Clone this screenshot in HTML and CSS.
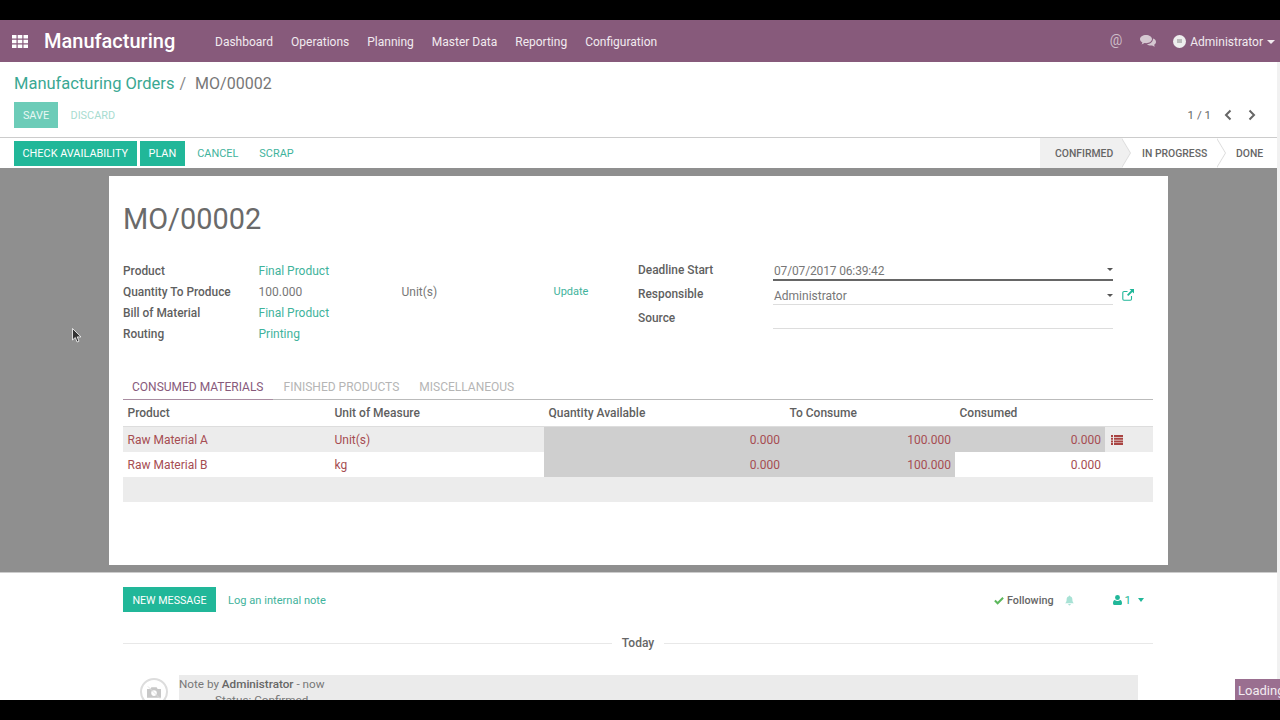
FILE: index.html
```html
<!DOCTYPE html>
<html lang="en">
<head>
  <meta charset="UTF-8">
  <title>MO/00002 - Manufacturing</title>
  <link rel="stylesheet" href="styles.css">
</head>
<body>
  <div class="screen">
    <header class="navbar">
      <svg class="apps-icon" width="16" height="13" viewBox="0 0 16 13">
        <path fill="#fff" d="M0 0h4.500v3.500H0zM5.700 0h4.600v3.500H5.700zM11.500 0H16v3.500h-4.500zM0 4.700h4.500v3.600H0zM5.700 4.700h4.600v3.600H5.700zM11.500 4.700H16v3.600h-4.500zM0 9.500h4.500V13H0zM5.700 9.500h4.600V13H5.700zM11.500 9.500H16V13h-4.500z"/>
      </svg>
      <div class="brand">Manufacturing</div>
      <nav class="menu">
        <a>Dashboard</a>
        <a>Operations</a>
        <a>Planning</a>
        <a>Master Data</a>
        <a>Reporting</a>
        <a>Configuration</a>
      </nav>
      <div class="systray">
        <span class="at">@</span>
        <svg class="chat-icon" width="16" height="13" viewBox="0 0 16 13">
          <path fill="#d5c8d1" d="M6 0c3.300 0 6 1.800 6 4.100S9.300 8.200 6 8.200c-.5 0-1 0-1.500-.1-.8.7-1.800 1.100-3 1.300.5-.7.8-1.300.9-2C.9 6.700 0 5.500 0 4.100 0 1.800 2.700 0 6 0z"/>
          <path fill="#d5c8d1" d="M13 3.600c1.800.6 3 1.900 3 3.300 0 1.100-.7 2.100-1.900 2.800.1.700.5 1.300 1 1.900-1.100-.1-2.100-.6-2.900-1.200-.4.100-.9.100-1.300.1-1.600 0-3-.5-4-1.300 3.400-.1 6.200-2.200 6.100-5.600z"/>
        </svg>
        <span class="user">
          <span class="avatar"></span>
          Administrator
          <span class="caret"></span>
        </span>
      </div>
    </header>

    <section class="control-panel">
      <div class="breadcrumb">
        <a>Manufacturing Orders</a>
        <span class="slash">/</span>
        <span class="current">MO/00002</span>
      </div>
      <div class="panel-row">
        <div class="buttons">
          <button class="btn btn-save">SAVE</button>
          <button class="btn btn-discard">DISCARD</button>
        </div>
        <div class="pager">
          <span>1 / 1</span>
          <svg width="8" height="12" viewBox="0 0 8 12"><path d="M6.500 1.500 2 6l4.500 4.500" fill="none" stroke="#666" stroke-width="2"/></svg>
          <svg width="8" height="12" viewBox="0 0 8 12"><path d="M1.500 1.500 6 6l-4.500 4.500" fill="none" stroke="#666" stroke-width="2"/></svg>
        </div>
      </div>
    </section>

    <section class="statusbar">
      <div class="actions">
        <button class="btn btn-primary">CHECK AVAILABILITY</button>
        <button class="btn btn-primary btn-plan">PLAN</button>
        <button class="btn btn-link">CANCEL</button>
        <button class="btn btn-link">SCRAP</button>
      </div>
      <div class="stages">
        <span class="stage stage-active">CONFIRMED</span>
        <span class="stage stage-progress">IN PROGRESS</span>
        <span class="stage stage-done">DONE</span>
      </div>
    </section>

    <main class="form-view">
      <div class="sheet">
        <h1>MO/00002</h1>
        <div class="groups">
          <div class="group-left">
            <div class="field-row"><label>Product</label><a class="value">Final Product</a></div>
            <div class="field-row">
              <label>Quantity To Produce</label>
              <span class="value qty">100.000</span>
              <span class="value unit">Unit(s)</span>
              <a class="update">Update</a>
            </div>
            <div class="field-row"><label>Bill of Material</label><a class="value">Final Product</a></div>
            <div class="field-row"><label>Routing</label><a class="value">Printing</a></div>
          </div>
          <div class="group-right">
            <div class="input-row">
              <label>Deadline Start</label>
              <div class="input input-focus"><span class="date">07/07/2017 06:39:42</span><span class="caret-small"></span></div>
            </div>
            <div class="input-row">
              <label>Responsible</label>
              <div class="input">Administrator<span class="caret-small"></span></div>
              <svg class="ext-icon" width="12" height="12" viewBox="0 0 12 12">
                <path d="M9.500 7v3a1.200 1.200 0 0 1-1.200 1.200H2A1.200 1.200 0 0 1 .8 10V3.700A1.200 1.200 0 0 1 2 2.500h3.500" fill="none" stroke="#21b799" stroke-width="1.100"/>
                <path d="M7.500 0H12v4.500l-1.600-1.600L6.300 7 5 5.700l4.100-4.100z" fill="#21b799"/>
              </svg>
            </div>
            <div class="input-row">
              <label>Source</label>
              <div class="input"></div>
            </div>
          </div>
        </div>

        <div class="tabs">
          <a class="tab tab-active">CONSUMED MATERIALS</a>
          <a class="tab">FINISHED PRODUCTS</a>
          <a class="tab">MISCELLANEOUS</a>
        </div>

        <table class="lines">
          <colgroup>
            <col class="col-product">
            <col class="col-uom">
            <col class="col-avail">
            <col class="col-consume">
            <col class="col-consumed">
            <col class="col-icon">
          </colgroup>
          <thead>
            <tr><th>Product</th><th>Unit of Measure</th><th>Quantity Available</th><th>To Consume</th><th>Consumed</th><th></th></tr>
          </thead>
          <tbody>
            <tr class="row-odd">
              <td>Raw Material A</td>
              <td>Unit(s)</td>
              <td class="num ro avail">0.000</td>
              <td class="num ro">100.000</td>
              <td class="num ro">0.000</td>
              <td>
                <svg class="list-icon" width="12" height="10" viewBox="0 0 12 10">
                  <path fill="#a94442" d="M0 0h2v2H0zM3 0h9v2H3zM0 2.700h2v2H0zM3 2.700h9v2H3zM0 5.400h2v2H0zM3 5.400h9v2H3zM0 8h2v2H0zM3 8h9v2H3z"/>
                </svg>
              </td>
            </tr>
            <tr>
              <td>Raw Material B</td>
              <td>kg</td>
              <td class="num ro avail">0.000</td>
              <td class="num ro">100.000</td>
              <td class="num">0.000</td>
              <td></td>
            </tr>
            <tr class="row-empty"><td colspan="6"></td></tr>
          </tbody>
        </table>
      </div>
    </main>

    <section class="chatter">
      <div class="chatter-top">
        <button class="btn btn-primary btn-message">NEW MESSAGE</button>
        <a class="log-note">Log an internal note</a>
        <div class="followers">
          <svg width="10" height="9" viewBox="0 0 11 9"><path d="M1 4.500 4 7.500 10 1.500" fill="none" stroke="#5cb85c" stroke-width="2.200"/></svg>
          <span class="following">Following</span>
          <svg class="bell" width="9" height="11" viewBox="0 0 11 12"><path fill="#a8e2d5" d="M5.500 0c.5 0 .8.300.8.800C8 1.200 9 2.600 9 4.500c0 2.700.7 3.900 2 5H0c1.300-1.100 2-2.300 2-5 0-1.900 1-3.300 2.700-3.700 0-.5.300-.8.800-.8zM4 10.300h3c0 .9-.6 1.700-1.500 1.700S4 11.200 4 10.300z"/></svg>
          <svg class="person" width="9" height="10" viewBox="0 0 9 10"><path fill="#21b799" d="M4.500 0a2.400 2.400 0 0 1 2.400 2.500A2.400 2.400 0 0 1 4.500 5a2.400 2.400 0 0 1-2.400-2.500A2.400 2.400 0 0 1 4.500 0zM1.800 5c.7.600 1.700.9 2.700.9S6.500 5.600 7.200 5C8.300 5.300 9 6.400 9 8.200 9 9.300 8.400 10 7.500 10h-6C.6 10 0 9.300 0 8.200 0 6.400.7 5.300 1.800 5z"/></svg>
          <span class="follow-count">1</span>
          <span class="caret caret-green"></span>
        </div>
      </div>
      <div class="date-sep"><span>Today</span></div>
      <div class="message">
        <div class="msg-avatar">
          <svg width="14" height="13" viewBox="0 0 16 14">
            <path fill="#c8c8c8" d="M5 1h6l1.200 2H16v10H0V3h3.800zM8 4.500a3.200 3.200 0 1 0 0 6.400 3.200 3.200 0 0 0 0-6.400z"/>
            <path d="M1 0l14 14" stroke="#ddd" stroke-width="1"/>
          </svg>
        </div>
        <div class="msg-body">
          <div class="msg-head">Note by <b>Administrator</b> - now</div>
          <div class="msg-text">Status: Confirmed</div>
        </div>
      </div>
    </section>

    <div class="scrollbar"></div>
    <div class="loading">Loading</div>
    <svg class="cursor" width="10" height="15" viewBox="0 0 10 15">
      <path d="M.5.500v11.500l2.800-2.500 1.800 4.500 1.900-.8-1.800-4.300h3.800z" fill="#333" stroke="#fff" stroke-width=".8"/>
    </svg>
  </div>
</body>
</html>
```

FILE: styles.css
```css
:root {
  --primary-color: #21b799;
  --link-color: #3fb39c;
  --navbar-color: #875a7b;
  --text-color: #666;
  --danger-color: #a64d52;
}

html, body {
  margin: 0;
  height: 100%;
  background-color: #000;
  overflow: hidden;
}

body {
  font-family: Roboto, "Noto Sans", sans-serif;
  font-size: 12px;
  color: var(--text-color);
}

.screen {
  position: relative;
  margin-top: 20px;
  height: 680px;
  overflow: hidden;
  background-color: #fff;
  display: flex;
  flex-direction: column;
}

/* top bar */
.navbar {
  height: 42px;
  flex: none;
  display: flex;
  align-items: center;
  background-color: var(--navbar-color);
  color: #f1eaef;
}

.apps-icon {
  margin-left: 12px;
  margin-right: 16px;
}

.brand {
  font-size: 20px;
  font-weight: 500;
  color: #fff;
  width: 171px;
}

.menu {
  display: flex;
  gap: 18px;
  font-size: 12px;
  padding-top: 1px;
}

.systray {
  margin-left: auto;
  display: flex;
  align-items: center;
  margin-right: 5px;
}

.at {
  font-size: 14px;
  color: #cdbdc8;
  margin-right: 18px;
  margin-top: -3px;
}

.chat-icon {
  margin-right: 17px;
}

.user {
  display: flex;
  align-items: center;
  font-size: 12px;
  padding-top: 1px;
}

.avatar {
  position: relative;
  width: 13px;
  height: 13px;
  border-radius: 50%;
  background-color: #eee;
  margin-right: 4px;
}

.avatar::after {
  content: "";
  position: absolute;
  left: 4px;
  top: 4px;
  width: 5px;
  height: 4px;
  background-color: #bbb;
}

.caret {
  width: 0;
  height: 0;
  margin-left: 4px;
  border-left: 4px solid transparent;
  border-right: 4px solid transparent;
  border-top: 4px solid #f1eaef;
}

/* control panel */
.control-panel {
  height: 76px;
  flex: none;
  box-sizing: border-box;
  padding: 10px 14px 0;
  border-bottom: 1px solid #ccc;
}

.breadcrumb {
  font-size: 16px;
  line-height: 24px;
  display: flex;
  align-items: center;
}

.breadcrumb a {
  font-size: 16.5px;
  color: #3aa893;
}

.slash {
  color: #888;
  margin: 0 9px 0 5px;
}

.current {
  color: #777;
}

.panel-row {
  display: flex;
  justify-content: space-between;
  align-items: center;
  margin-top: 6px;
}

.buttons {
  display: flex;
}

.btn {
  border: none;
  font-family: inherit;
  font-size: 10.9px;
  height: 25px;
  padding: 0 8.5px;
  background: none;
  cursor: pointer;
}

.btn-save {
  height: 26px;
  width: 44px;
  padding: 1px 0 0;
  background-color: #6cccb8;
  color: #e8f7f3;
}

.btn-discard {
  height: 26px;
  padding: 1px 9px 0;
  margin-left: 3.5px;
  color: #a8dcd0;
}

.pager {
  display: flex;
  align-items: center;
  margin-right: 10px;
  font-size: 11.5px;
  color: #666;
}

.pager svg {
  margin-left: 13px;
}

.pager svg + svg {
  margin-left: 16px;
}

/* status bar */
.statusbar {
  height: 30px;
  flex: none;
  box-sizing: border-box;
  padding-left: 14px;
  display: flex;
  justify-content: space-between;
  align-items: stretch;
}

.actions {
  display: flex;
  align-items: center;
  gap: 3px;
}

.btn-primary {
  background-color: var(--primary-color);
  color: #fff;
}

.btn-plan {
  padding: 0 9px;
}

.btn-link {
  color: var(--link-color);
  padding: 0 9px;
}

.stages {
  display: flex;
}

.stage {
  position: relative;
  display: flex;
  align-items: center;
  font-size: 10.4px;
  font-weight: 500;
  color: #666;
  box-sizing: border-box;
}

.stage-active {
  width: 82px;
  padding-left: 15px;
  background-color: #f0f0f0;
}

.stage-progress {
  width: 95px;
  padding-left: 20px;
}

.stage-done {
  width: 63px;
  padding-left: 19px;
}

/* chevron between the stages */
.stage-active::before,
.stage-progress::before,
.stage-active::after,
.stage-progress::after {
  content: "";
  position: absolute;
  top: 0;
  bottom: 0;
  width: 9px;
  clip-path: polygon(0 0, 100% 50%, 0 100%);
}

.stage-active::before,
.stage-progress::before {
  right: -9px;
  background-color: #ddd;
}

.stage-active::after,
.stage-progress::after {
  right: -8px;
  background-color: #fff;
}

.stage-active::after {
  background-color: #f0f0f0;
}

/* form */
.form-view {
  height: 405px;
  flex: none;
  box-sizing: border-box;
  background-color: #8f8f8f;
  padding: 8px 112px 7px 109px;
  border-bottom: 1px solid #ccc;
}

.sheet {
  height: 100%;
  box-sizing: border-box;
  background-color: #fff;
  padding: 24px 15px 0 14px;
}

h1 {
  margin: 0;
  font-size: 28.9px;
  font-weight: 400;
  line-height: 38px;
  color: #6a6a6a;
}

.groups {
  display: flex;
  margin-top: 23px;
  height: 111px;
}

.group-left {
  width: 515px;
  margin-top: -1px;
}

.field-row {
  display: flex;
  height: 21.2px;
  align-items: center;
}

.field-row label {
  width: 135.5px;
  flex: none;
}

label {
  font-size: 11.9px;
  font-weight: 500;
  color: #5f5f5f;
}

.value {
  color: #777;
}

a.value {
  color: var(--link-color);
}

.qty {
  width: 143px;
}

.unit {
  width: 152px;
}

.update {
  font-size: 11px;
  color: var(--link-color);
}

.input-row {
  display: flex;
  align-items: flex-start;
  height: 24px;
  position: relative;
}

.input-row label {
  width: 135px;
  flex: none;
  padding-top: 2px;
}

.input {
  width: 339.5px;
  height: 18px;
  line-height: 19px;
  padding-left: 1px;
  box-sizing: border-box;
  border-bottom: 1px solid #ddd;
  color: #777;
  position: relative;
  margin-top: 2px;
}

.input-focus {
  border-bottom: 2px solid #666;
  height: 20px;
  margin-top: 0;
  line-height: 20px;
}

.date {
  letter-spacing: -0.15px;
}

.caret-small {
  position: absolute;
  right: 0;
  top: 7px;
  width: 0;
  height: 0;
  border-left: 3.5px solid transparent;
  border-right: 3.5px solid transparent;
  border-top: 3.5px solid #555;
}

.ext-icon {
  margin-left: 9px;
  margin-top: 4px;
}

/* tabs */
.tabs {
  display: flex;
  height: 28px;
  box-sizing: border-box;
  border-bottom: 1px solid #bbb;
  font-size: 12px;
  line-height: 30px;
  color: #b5b5b5;
}

.tab {
  height: 28px;
  box-sizing: border-box;
  padding: 0 9px;
  margin-right: 2px;
}

.tab-active {
  color: #875a7b;
  border-bottom: 1px solid #a98da1;
}

/* table */
.lines {
  width: 1030px;
  table-layout: fixed;
  border-collapse: collapse;
  font-size: 12px;
}

.col-product { width: 207px; }
.col-uom { width: 214px; }
.col-avail { width: 241px; }
.col-consume { width: 170px; }
.col-consumed { width: 150px; }
.col-icon { width: 48px; }

.lines th {
  height: 26px;
  padding: 1px 4px 0 4.5px;
  box-sizing: border-box;
  text-align: left;
  font-weight: 500;
  color: #5f5f5f;
  border-bottom: 1px solid #ddd;
}

.lines td {
  height: 25.5px;
  box-sizing: border-box;
  padding: 1px 4px 0 4.5px;
  color: var(--danger-color);
}

.lines .avail {
  padding-right: 5px;
}

.row-odd {
  background-color: #ececec;
}

.lines .row-empty td {
  background-color: #ececec;
  height: 25px;
}

.num {
  text-align: right;
}

.lines .ro {
  background-color: #cfcfcf;
}

.list-icon {
  display: block;
  margin-left: 1px;
}

/* chatter */
.chatter {
  flex: 1;
  padding: 0 127px 0 123px;
  min-height: 0;
}

.chatter-top {
  display: flex;
  align-items: center;
  margin-top: 14px;
}

.btn-message {
  font-size: 10.7px;
  width: 93px;
  padding: 1px 0 0;
}

.log-note {
  margin-left: 12px;
  margin-top: 1px;
  font-size: 11.1px;
  color: var(--link-color);
}

.followers {
  margin-left: auto;
  margin-top: 1px;
  display: flex;
  align-items: center;
  margin-right: 9px;
  font-size: 10.8px;
}

.following {
  margin-left: 3px;
  font-weight: 500;
}

.bell {
  margin-left: 11px;
}

.person {
  margin-left: 39px;
}

.follow-count {
  margin-left: 3px;
  font-size: 11.5px;
  color: var(--primary-color);
}

.caret-green {
  margin-left: 7px;
  border-top-color: var(--primary-color);
  border-left-width: 3.5px;
  border-right-width: 3.5px;
}

.date-sep {
  display: flex;
  align-items: center;
  gap: 10px;
  margin-top: 24px;
  font-weight: 500;
  color: #666;
}

.date-sep::before,
.date-sep::after {
  content: "";
  flex: 1;
  height: 1px;
  background-color: #e8e8e8;
}

.message {
  display: flex;
  margin-top: 25px;
  margin-left: 17px;
  margin-right: 15px;
}

.msg-avatar {
  width: 28px;
  height: 28px;
  margin-top: 3px;
  flex: none;
  box-sizing: border-box;
  border: 2px solid #ddd;
  border-radius: 50%;
  display: flex;
  align-items: center;
  justify-content: center;
}

.msg-body {
  flex: 1;
  margin-left: 11px;
  background-color: #ebebeb;
  height: 60px;
  font-size: 11.7px;
  color: #777;
}

.msg-head {
  line-height: 18px;
}

.msg-head b {
  font-weight: 500;
  color: #666;
}

.msg-text {
  margin: 0 0 0 36px;
}

.scrollbar {
  position: absolute;
  right: 0;
  top: 42px;
  bottom: 0;
  width: 3px;
  background-color: #f1f1f1;
}

.loading {
  position: absolute;
  right: 0;
  bottom: 0;
  width: 45px;
  height: 21px;
  box-sizing: border-box;
  padding: 4px 0 0 3px;
  overflow: hidden;
  white-space: nowrap;
  background-color: #9a6f90;
  color: #f3ecf1;
  font-size: 13px;
}

.cursor {
  position: absolute;
  left: 72px;
  top: 308px;
}
```
